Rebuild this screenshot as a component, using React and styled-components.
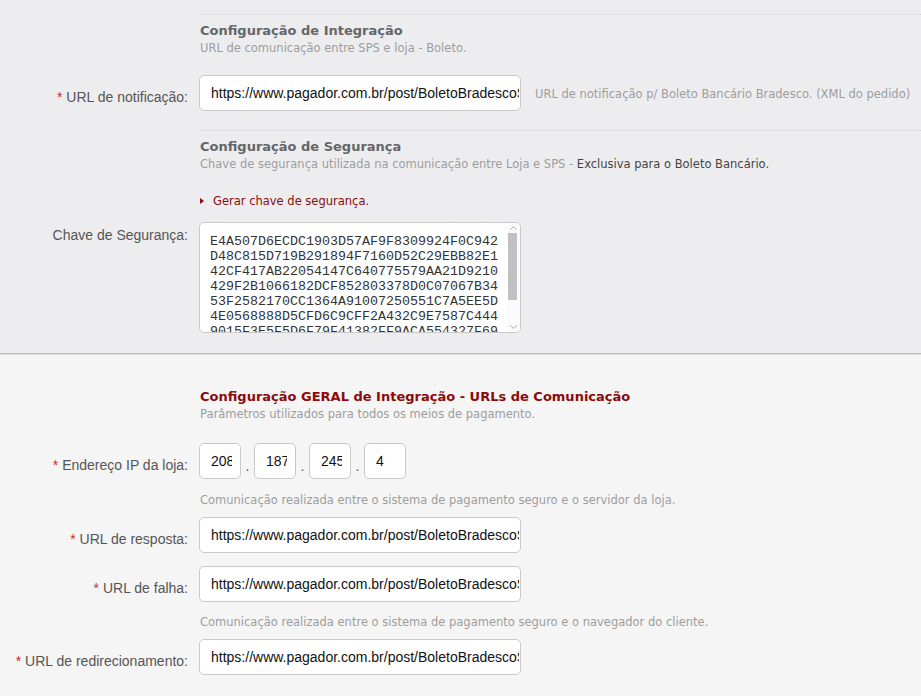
import React from "react";
import styled, { createGlobalStyle } from "styled-components";

const GlobalStyle = createGlobalStyle`
  html, body {
    margin: 0;
    padding: 0;
    background: #f5f5f5;
  }
  body {
    font-family: "DejaVu Sans", Verdana, sans-serif;
    font-size: 11.5px;
    color: #555;
  }
`;

const securityKey = [
  "E4A507D6ECDC1903D57AF9F8309924F0C942",
  "D48C815D719B291894F7160D52C29EBB82E1",
  "42CF417AB22054147C640775579AA21D9210",
  "429F2B1066182DCF852803378D0C07067B34",
  "53F2582170CC1364A91007250551C7A5EE5D",
  "4E0568888D5CFD6C9CFF2A432C9E7587C444",
  "9015F3E5F5D6F79F41382FF9ACA554327F69",
  "B7E20C4D81A9F3365E0D27C1A8846FB3D05E",
  "6A1F",
].join("\n");

const notifyUrl = "https://www.pagador.com.br/post/BoletoBradescoSPS/Notificacao.aspx";

const Chevron = ({ down }) => (
  <svg width="7" height="4" viewBox="0 0 7 4">
    <path
      d={down ? "M0.5 0.5L3.5 3.5L6.5 0.5" : "M0.5 3.5L3.5 0.5L6.5 3.5"}
      fill="none"
      stroke="#a8a8a8"
      strokeWidth="1"
    />
  </svg>
);

const App = () => {
  return (
    <>
      <GlobalStyle />
      <Page>
        <StoreSection>
          <BlockHead>
            <Title>Configuração de Integração</Title>
            <Subtitle>URL de comunicação entre SPS e loja - Boleto.</Subtitle>
          </BlockHead>

          <FieldRow $top={19}>
            <Label>
              <Req>*</Req> URL de notificação:
            </Label>
            <TextInput defaultValue={notifyUrl} />
            <SideHint>URL de notificação p/ Boleto Bancário Bradesco. (XML do pedido)</SideHint>
          </FieldRow>

          <BlockHead $top={19}>
            <Title>Configuração de Segurança</Title>
            <Subtitle>
              Chave de segurança utilizada na comunicação entre Loja e SPS -{" "}
              <Strong>Exclusiva para o Boleto Bancário.</Strong>
            </Subtitle>
          </BlockHead>

          <ActionLink href="#">Gerar chave de segurança.</ActionLink>

          <FieldRow $top={13} $align="start">
            <Label $offset={5}>Chave de Segurança:</Label>
            <KeyBox>
              <KeyArea defaultValue={securityKey} spellCheck={false} />
              <ScrollRail>
                <ScrollButton>
                  <Chevron />
                </ScrollButton>
                <ScrollTrack>
                  <ScrollThumb />
                </ScrollTrack>
                <ScrollButton>
                  <Chevron down />
                </ScrollButton>
              </ScrollRail>
            </KeyBox>
          </FieldRow>
        </StoreSection>

        <GeneralSection>
          <BlockHead $plain>
            <Title $accent>Configuração GERAL de Integração - URLs de Comunicação</Title>
            <Subtitle>Parâmetros utilizados para todos os meios de pagamento.</Subtitle>
          </BlockHead>

          <FieldRow $top={21}>
            <Label>
              <Req>*</Req> Endereço IP da loja:
            </Label>
            <IpGroup>
              <IpInput defaultValue="208" />
              <IpDot>.</IpDot>
              <IpInput defaultValue="187" />
              <IpDot>.</IpDot>
              <IpInput defaultValue="245" />
              <IpDot>.</IpDot>
              <IpInput defaultValue="4" />
            </IpGroup>
          </FieldRow>

          <Note $top={13}>
            Comunicação realizada entre o sistema de pagamento seguro e o servidor da loja.
          </Note>

          <FieldRow $top={9}>
            <Label>
              <Req>*</Req> URL de resposta:
            </Label>
            <TextInput defaultValue="https://www.pagador.com.br/post/BoletoBradescoSPS/Resposta.aspx" />
          </FieldRow>

          <FieldRow $top={13}>
            <Label>
              <Req>*</Req> URL de falha:
            </Label>
            <TextInput defaultValue="https://www.pagador.com.br/post/BoletoBradescoSPS/Falha.aspx" />
          </FieldRow>

          <Note $top={12}>
            Comunicação realizada entre o sistema de pagamento seguro e o navegador do cliente.
          </Note>

          <FieldRow $top={9}>
            <Label>
              <Req>*</Req> URL de redirecionamento:
            </Label>
            <TextInput defaultValue="https://www.pagador.com.br/post/BoletoBradescoSPS/Retorno.aspx" />
          </FieldRow>
        </GeneralSection>
      </Page>
    </>
  );
};

const Page = styled.div`
  width: 100%;
  min-height: 696px;
  background: #f5f5f5;
`;

const StoreSection = styled.section`
  background: #ededef;
  padding: 14px 0 20px;
  border-bottom: 1px solid #b9b9bb;
  box-shadow: 0 1px 0 #dcdcdc;
`;

const GeneralSection = styled.section`
  padding: 34px 0 20px;
`;

const BlockHead = styled.div`
  margin: ${(p) => p.$top || 0}px 0 0 200px;
  padding-top: ${(p) => (p.$plain ? 0 : 7)}px;
  border-top: ${(p) => (p.$plain ? "none" : "1px dotted #d2d2d4")};
`;

const Title = styled.h3`
  margin: 0;
  font-family: "DejaVu Sans", Verdana, sans-serif;
  font-size: 13px;
  font-weight: bold;
  line-height: 18px;
  color: ${(p) => (p.$accent ? "#8c0a0a" : "#666")};
`;

const Subtitle = styled.p`
  margin: 0;
  font-size: 11.5px;
  line-height: 16px;
  color: #9d9d9d;
`;

const Strong = styled.span`
  color: #444;
`;

const ActionLink = styled.a`
  display: flex;
  align-items: center;
  margin: 21px 0 0 200px;
  font-size: 11.5px;
  line-height: 16px;
  color: #8a0c0c;
  text-decoration: none;

  &::before {
    content: "";
    width: 0;
    height: 0;
    margin-right: 9px;
    border-top: 3.5px solid transparent;
    border-bottom: 3.5px solid transparent;
    border-left: 4px solid #8a0c0c;
  }
`;

const FieldRow = styled.div`
  display: grid;
  grid-template-columns: 199px auto auto;
  justify-content: start;
  align-items: ${(p) => p.$align || "center"};
  margin-top: ${(p) => p.$top || 0}px;
`;

const Label = styled.label`
  padding: ${(p) => p.$offset || 7}px 11px 0 0;
  text-align: right;
  font-family: "Liberation Sans", Arial, sans-serif;
  font-size: 14px;
  line-height: 16px;
  color: #555;
  white-space: nowrap;
`;

const Req = styled.span`
  color: #c62c2c;
`;

const TextInput = styled.input.attrs({ type: "text" })`
  box-sizing: border-box;
  width: 322px;
  height: 36px;
  padding: 0 1px 0 11px;
  border: 1px solid #c9c9c9;
  border-radius: 5px;
  background: #fff;
  font-family: "Liberation Sans", Arial, sans-serif;
  font-size: 14px;
  color: #111;
  outline: none;
`;

const SideHint = styled.span`
  margin-left: 14px;
  padding-top: 2px;
  font-size: 11.5px;
  color: #9d9d9d;
  white-space: nowrap;
`;

const KeyBox = styled.div`
  box-sizing: border-box;
  display: flex;
  width: 322px;
  height: 111px;
  border: 1px solid #c9c9c9;
  border-radius: 5px;
  background: #fff;
  overflow: hidden;
`;

const KeyArea = styled.textarea`
  flex: 1;
  min-width: 0;
  margin: 0;
  padding: 11px 4px 0 10px;
  border: none;
  background: transparent;
  font-family: "Liberation Mono", "Courier New", monospace;
  font-size: 13.33px;
  line-height: 15px;
  color: #333;
  resize: none;
  overflow: hidden;
  outline: none;
`;

const ScrollRail = styled.div`
  display: flex;
  flex-direction: column;
  width: 13px;
  background: #fbfbfb;
`;

const ScrollButton = styled.div`
  display: flex;
  align-items: center;
  justify-content: center;
  height: 10px;
  padding-right: 1px;
`;

const ScrollTrack = styled.div`
  flex: 1;
  padding: 0 3px 0 1px;
`;

const ScrollThumb = styled.div`
  height: 67px;
  background: #c1c1c1;
`;

const IpGroup = styled.div`
  display: flex;
  align-items: center;
`;

const IpInput = styled(TextInput)`
  width: 42px;
  padding-right: 8px;
`;

const IpDot = styled.span`
  width: 13px;
  padding-top: 10px;
  text-align: center;
  font-family: "Liberation Sans", Arial, sans-serif;
  font-size: 14px;
  color: #555;
`;

const Note = styled.p`
  margin: ${(p) => p.$top || 0}px 0 0 200px;
  font-size: 11.5px;
  line-height: 16px;
  color: #9d9d9d;
`;

export default App;
